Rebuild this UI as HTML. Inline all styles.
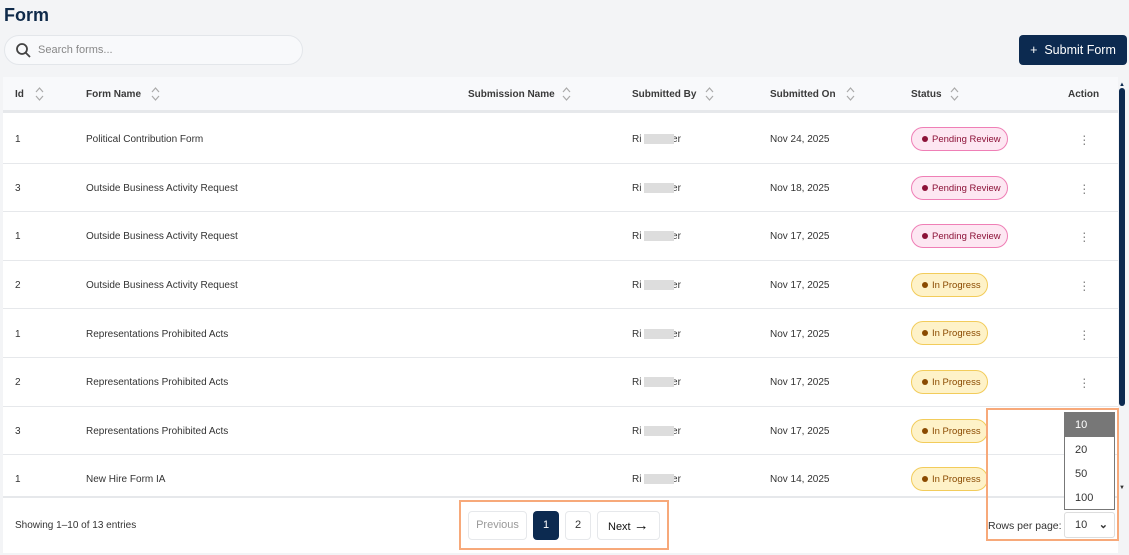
<!DOCTYPE html>
<html><head><style>
*{box-sizing:border-box;margin:0;padding:0}
body{width:1129px;height:555px;background:#f3f4f6;font-family:"Liberation Sans",sans-serif;position:relative;overflow:hidden;color:#333}
.abs{position:absolute}
h1{position:absolute;left:4px;top:5px;font-size:18px;font-weight:bold;color:#0f2a4a}
.search{left:4px;top:35px;width:299px;height:30px;border:1px solid #e3e6ea;border-radius:15px;background:#f8f9fb}
.search span{position:absolute;left:33px;top:8px;font-size:11px;color:#888}
.btn{left:1019px;top:35px;width:108px;height:30px;background:#0c2a50;border-radius:4px;color:#fff;font-size:12.5px;line-height:30px;text-align:center}
.card{left:3px;top:77px;width:1115px;height:476px;background:#fff}
.hdr{left:3px;top:77px;width:1115px;height:36px;background:#f8f9fb;border-bottom:3px solid #e6e8eb}
.th{position:absolute;top:89px;font-size:10px;font-weight:bold;color:#3a3a3a}
.td{position:absolute;font-size:10px;color:#333}
.line{position:absolute;left:3px;width:1115px;height:1px;background:#e6e8eb}
.pill{position:absolute;height:24px;border-radius:12px;font-size:9.5px;line-height:23px;padding-left:20px}
.pill:before{content:"";position:absolute;left:10px;top:8px;width:6px;height:6px;border-radius:3px}
.pr{left:911px;width:97px;background:#fde7f2;border:1px solid #ef7fb6;color:#8c1238}
.pr:before{background:#8c1238}
.ip{left:911px;width:77px;background:#fef2c8;border:1px solid #f2cc5b;color:#8a4a00}
.ip:before{background:#8a4a00}
.dots{position:absolute;left:1082px;width:2px;color:#888;font-size:14px;line-height:4px}
.blur{position:absolute;left:644px;width:30px;height:10px;background:#ddd}
.sort{position:absolute;top:86px}
</style></head><body>
<h1>Form</h1>
<div class="abs search"><svg class="abs" style="left:10px;top:6px" width="17" height="17" viewBox="0 0 17 17"><circle cx="7" cy="7" r="5" fill="none" stroke="#444" stroke-width="1.8"/><line x1="10.5" y1="10.5" x2="15" y2="15" stroke="#444" stroke-width="1.8"/></svg><span>Search forms...</span></div>
<div class="abs btn">+&nbsp; Submit Form</div>
<div class="abs card"></div>
<div class="abs hdr"></div>
<div class="th" style="left:15px">Id</div>
<div class="th" style="left:86px">Form Name</div>
<div class="th" style="left:468px">Submission Name</div>
<div class="th" style="left:632px">Submitted By</div>
<div class="th" style="left:770px">Submitted On</div>
<div class="th" style="left:911px">Status</div>
<div class="th" style="left:1068px">Action</div>
<svg class="sort" style="left:35px" width="9" height="16"><path d="M1 6 4.5 2 8 6M1 10 4.5 14 8 10" fill="none" stroke="#aaa" stroke-width="1.2"/></svg>
<svg class="sort" style="left:151px" width="9" height="16"><path d="M1 6 4.5 2 8 6M1 10 4.5 14 8 10" fill="none" stroke="#aaa" stroke-width="1.2"/></svg>
<svg class="sort" style="left:562px" width="9" height="16"><path d="M1 6 4.5 2 8 6M1 10 4.5 14 8 10" fill="none" stroke="#aaa" stroke-width="1.2"/></svg>
<svg class="sort" style="left:705px" width="9" height="16"><path d="M1 6 4.5 2 8 6M1 10 4.5 14 8 10" fill="none" stroke="#aaa" stroke-width="1.2"/></svg>
<svg class="sort" style="left:846px" width="9" height="16"><path d="M1 6 4.5 2 8 6M1 10 4.5 14 8 10" fill="none" stroke="#aaa" stroke-width="1.2"/></svg>
<svg class="sort" style="left:950px" width="9" height="16"><path d="M1 6 4.5 2 8 6M1 10 4.5 14 8 10" fill="none" stroke="#aaa" stroke-width="1.2"/></svg>

<div class="td" style="left:15px;top:134px">1</div><div class="td" style="left:86px;top:134px">Political Contribution Form</div><div class="td" style="left:632px;top:134px">Ri&nbsp;&nbsp;&nbsp;&nbsp;&nbsp;&nbsp;&nbsp;&nbsp;&nbsp;&nbsp;&nbsp;er</div><div class="blur" style="top:134px"></div><div class="td" style="left:770px;top:134px">Nov 24, 2025</div><div class="pill pr" style="top:127px">Pending Review</div><div class="dots" style="top:133px">·<br>·<br>·</div>
<div class="line" style="top:163px"></div>
<div class="td" style="left:15px;top:183px">3</div><div class="td" style="left:86px;top:183px">Outside Business Activity Request</div><div class="td" style="left:632px;top:183px">Ri&nbsp;&nbsp;&nbsp;&nbsp;&nbsp;&nbsp;&nbsp;&nbsp;&nbsp;&nbsp;&nbsp;er</div><div class="blur" style="top:183px"></div><div class="td" style="left:770px;top:183px">Nov 18, 2025</div><div class="pill pr" style="top:176px">Pending Review</div><div class="dots" style="top:182px">·<br>·<br>·</div>
<div class="line" style="top:211px"></div>
<div class="td" style="left:15px;top:231px">1</div><div class="td" style="left:86px;top:231px">Outside Business Activity Request</div><div class="td" style="left:632px;top:231px">Ri&nbsp;&nbsp;&nbsp;&nbsp;&nbsp;&nbsp;&nbsp;&nbsp;&nbsp;&nbsp;&nbsp;er</div><div class="blur" style="top:231px"></div><div class="td" style="left:770px;top:231px">Nov 17, 2025</div><div class="pill pr" style="top:224px">Pending Review</div><div class="dots" style="top:230px">·<br>·<br>·</div>
<div class="line" style="top:260px"></div>
<div class="td" style="left:15px;top:280px">2</div><div class="td" style="left:86px;top:280px">Outside Business Activity Request</div><div class="td" style="left:632px;top:280px">Ri&nbsp;&nbsp;&nbsp;&nbsp;&nbsp;&nbsp;&nbsp;&nbsp;&nbsp;&nbsp;&nbsp;er</div><div class="blur" style="top:280px"></div><div class="td" style="left:770px;top:280px">Nov 17, 2025</div><div class="pill ip" style="top:273px">In Progress</div><div class="dots" style="top:279px">·<br>·<br>·</div>
<div class="line" style="top:308px"></div>
<div class="td" style="left:15px;top:329px">1</div><div class="td" style="left:86px;top:329px">Representations Prohibited Acts</div><div class="td" style="left:632px;top:329px">Ri&nbsp;&nbsp;&nbsp;&nbsp;&nbsp;&nbsp;&nbsp;&nbsp;&nbsp;&nbsp;&nbsp;er</div><div class="blur" style="top:329px"></div><div class="td" style="left:770px;top:329px">Nov 17, 2025</div><div class="pill ip" style="top:321px">In Progress</div><div class="dots" style="top:328px">·<br>·<br>·</div>
<div class="line" style="top:357px"></div>
<div class="td" style="left:15px;top:377px">2</div><div class="td" style="left:86px;top:377px">Representations Prohibited Acts</div><div class="td" style="left:632px;top:377px">Ri&nbsp;&nbsp;&nbsp;&nbsp;&nbsp;&nbsp;&nbsp;&nbsp;&nbsp;&nbsp;&nbsp;er</div><div class="blur" style="top:377px"></div><div class="td" style="left:770px;top:377px">Nov 17, 2025</div><div class="pill ip" style="top:370px">In Progress</div><div class="dots" style="top:376px">·<br>·<br>·</div>
<div class="line" style="top:406px"></div>
<div class="td" style="left:15px;top:426px">3</div><div class="td" style="left:86px;top:426px">Representations Prohibited Acts</div><div class="td" style="left:632px;top:426px">Ri&nbsp;&nbsp;&nbsp;&nbsp;&nbsp;&nbsp;&nbsp;&nbsp;&nbsp;&nbsp;&nbsp;er</div><div class="blur" style="top:426px"></div><div class="td" style="left:770px;top:426px">Nov 17, 2025</div><div class="pill ip" style="top:419px">In Progress</div>
<div class="line" style="top:454px"></div>
<div class="td" style="left:15px;top:474px">1</div><div class="td" style="left:86px;top:474px">New Hire Form IA</div><div class="td" style="left:632px;top:474px">Ri&nbsp;&nbsp;&nbsp;&nbsp;&nbsp;&nbsp;&nbsp;&nbsp;&nbsp;&nbsp;&nbsp;er</div><div class="blur" style="top:474px"></div><div class="td" style="left:770px;top:474px">Nov 14, 2025</div><div class="pill ip" style="top:467px">In Progress</div>
<div class="line" style="top:496px;height:2px"></div>
<div class="abs" style="left:1119px;top:88px;width:6px;height:318px;background:#0c2a50;border-radius:3px"></div>
<div class="abs" style="left:1119px;top:82px;font-size:6px;color:#0c2a50">▲</div>
<div class="abs" style="left:1119px;top:485px;font-size:6px;color:#333">▼</div>

<div class="td" style="left:15px;top:520px">Showing 1–10 of 13 entries</div>
<div class="abs" style="left:459px;top:500px;width:210px;height:50px;border:2px solid #f7a97a"></div>
<div class="abs" style="left:468px;top:511px;width:59px;height:29px;border:1px solid #e6e8eb;border-radius:4px;font-size:11px;color:#999;text-align:center;line-height:27px">Previous</div>
<div class="abs" style="left:533px;top:511px;width:26px;height:29px;background:#0c2a50;border-radius:4px;font-size:11px;color:#fff;text-align:center;line-height:29px">1</div>
<div class="abs" style="left:565px;top:511px;width:26px;height:29px;border:1px solid #e6e8eb;border-radius:4px;font-size:11px;text-align:center;line-height:27px">2</div>
<div class="abs" style="left:597px;top:511px;width:63px;height:29px;border:1px solid #e6e8eb;border-radius:4px;font-size:11px;color:#111;line-height:27px;padding-left:10px">Next <span style="font-size:15px;font-weight:bold">→</span></div>

<div class="abs" style="left:986px;top:408px;width:133px;height:133px;border:2px solid #f7a97a"></div>
<div class="abs" style="left:1064px;top:412px;width:51px;height:98px;background:#fff;border:1px solid #777"></div>
<div class="abs" style="left:1065px;top:413px;width:49px;height:24px;background:#777;color:#fff;font-size:11px;line-height:24px;padding-left:10px">10</div>
<div class="td" style="left:1075px;top:444px;font-size:11px">20</div>
<div class="td" style="left:1075px;top:468px;font-size:11px">50</div>
<div class="td" style="left:1075px;top:492px;font-size:11px">100</div>
<div class="td" style="left:988px;top:520px;font-size:10.5px">Rows per page:</div>
<div class="abs" style="left:1064px;top:512px;width:51px;height:26px;border:1px solid #ddd;border-radius:3px;font-size:11px;line-height:24px;padding-left:10px">10 <span style="position:absolute;right:6px;font-weight:bold">⌄</span></div>
</body></html>
